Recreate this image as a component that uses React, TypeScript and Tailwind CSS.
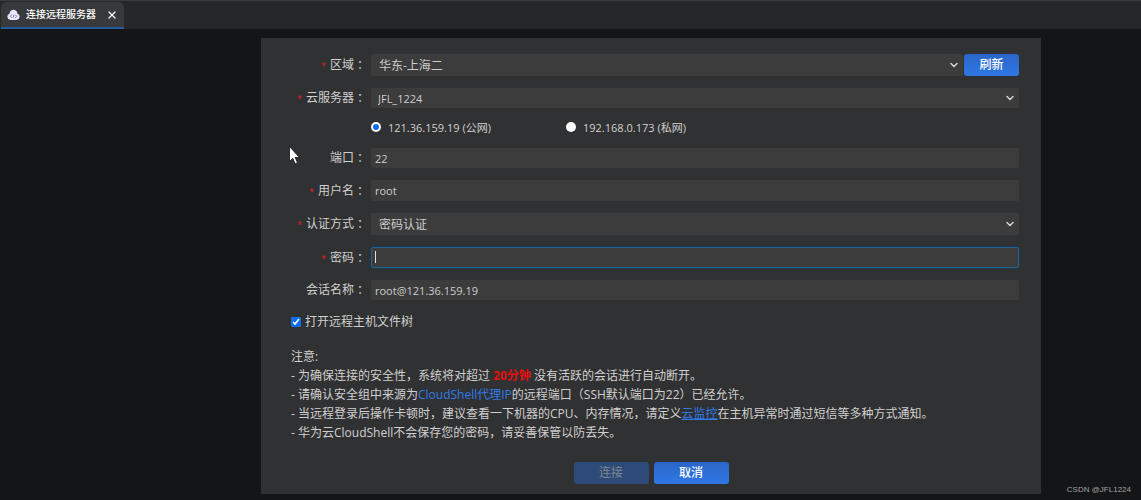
import type { ReactNode } from "react";
import { ChevronDown, X } from "lucide-react";

const fieldBase =
  "w-full min-w-0 rounded-xs bg-[#3c3c3c] text-[#cccccc] outline-none";

function Row({
  label,
  htmlFor,
  required,
  className,
  children,
}: {
  label: string;
  htmlFor: string;
  required?: boolean;
  className: string;
  children: ReactNode;
}) {
  return (
    <div className={`flex items-center ${className}`}>
      <label
        htmlFor={htmlFor}
        className="flex w-[75px] shrink-0 items-center justify-end leading-4 whitespace-nowrap"
      >
        {required && <span className="mr-1 pt-0.5 text-[9px] text-[#e0201f]">*</span>}
        {label}
        <span className="font-['Noto_Sans_CJK_TC',sans-serif]">：</span>
      </label>
      <div className="ml-[5px] flex min-w-0 flex-1 gap-px">{children}</div>
    </div>
  );
}

function Select({
  id,
  value,
  className,
}: {
  id: string;
  value: string;
  className: string;
}) {
  return (
    <div className="relative min-w-0 flex-1">
      <select id={id} className={`block appearance-none pt-0.5 ${fieldBase} ${className}`}>
        <option>{value}</option>
      </select>
      <ChevronDown
        size={12}
        strokeWidth={3}
        className="pointer-events-none absolute inset-y-0 right-[3px] my-auto text-[#d4d4d4]"
      />
    </div>
  );
}

function CloudLogo() {
  return (
    <svg width="13" height="12" viewBox="0 0 26 24" aria-hidden="true">
      <path
        d="M7 22a6.500 6.500 0 0 1-2-12.600C5.500 4.500 9 1.500 13 1.500s7.500 3 8 7.900A6.500 6.500 0 0 1 19 22z"
        fill="#e6e8fb"
      />
      <path
        d="M9.500 11.500 6.500 14.500l3 3M16.500 11.500l3 3-3 3M14 11.500l-2 6"
        fill="none"
        stroke="#6c79bb"
        strokeWidth="1.800"
      />
    </svg>
  );
}

export default function App() {
  return (
    <div className="relative flex min-h-screen flex-col bg-[#141517] font-['Open_Sans','Noto_Sans_CJK_SC',sans-serif] text-xs text-[#d0d0d0]">
      <header className="flex h-[29px] items-end border-t border-[#3a3b3c] bg-[#252728]">
        <div className="ml-px flex h-[27px] items-center rounded-t-md border-b-2 border-[#245a9e] bg-[#38393a] pr-1.5 pl-1.5 text-white">
          <CloudLogo />
          <span className="ml-1.5 text-[10px] font-medium">连接远程服务器</span>
          <button type="button" aria-label="关闭" className="ml-2.5 flex">
            <X size={12} strokeWidth={2.500} />
          </button>
        </div>
      </header>

      <main className="pt-[9px] pr-[100px] pb-1.5 pl-[261px]">
        <form className="bg-[#303132] px-[30px] pt-4 pb-2.5">
          <div className="mr-[-8px]">
            <Row label="区域" htmlFor="region" required className="mb-3 h-[22px]">
              <Select id="region" value="华东-上海二" className="h-[22px] pl-2 text-xs" />
              <button
                type="button"
                className="h-[22px] w-[55px] rounded-[3px] bg-linear-to-b from-[#2b66c8] to-[#2f78e4] font-medium text-white"
              >
                刷新
              </button>
            </Row>
            <Row label="云服务器" htmlFor="server" required className="h-5">
              <Select id="server" value="JFL_1224" className="h-5 pl-[7px] text-[11px]" />
            </Row>
            <div className="ml-20 flex h-10 items-center text-[11px]">
              <label className="flex w-[195px] items-center">
                <input
                  type="radio"
                  name="address"
                  defaultChecked
                  className="mr-[7px] mb-0.5 size-[10px] appearance-none rounded-full border-2 border-white bg-[#0b6df0]"
                />
                121.36.159.19 (公网)
              </label>
              <label className="flex items-center">
                <input
                  type="radio"
                  name="address"
                  className="mr-[7px] mb-0.5 size-[10px] appearance-none rounded-full bg-white"
                />
                192.168.0.173 (私网)
              </label>
            </div>
            <Row label="端口" htmlFor="port" className="mb-3 h-5">
              <input id="port" defaultValue="22" className={`h-5 px-1 text-[11px] ${fieldBase}`} />
            </Row>
            <Row label="用户名" htmlFor="user" required className="mb-3 h-[21px]">
              <input
                id="user"
                defaultValue="root"
                className={`h-[21px] px-1 text-[11px] ${fieldBase}`}
              />
            </Row>
            <Row label="认证方式" htmlFor="auth" required className="mb-3 h-[22px]">
              <Select id="auth" value="密码认证" className="h-[22px] pl-2 text-xs" />
            </Row>
            <Row label="密码" htmlFor="password" required className="mb-3 h-[21px]">
              <div className="relative flex-1">
                <input
                  id="password"
                  type="password"
                  className={`block h-[21px] border border-[#22628f] px-1 text-[11px] caret-transparent ring-1 ring-[#22384a] ${fieldBase}`}
                />
                <span className="absolute top-1 left-1 h-3 w-px bg-[#e0e0e0]" />
              </div>
            </Row>
            <Row label="会话名称" htmlFor="session" className="h-5">
              <input
                id="session"
                defaultValue="root@121.36.159.19"
                className={`h-5 px-1 text-[11px] ${fieldBase}`}
              />
            </Row>
          </div>

          <label className="mt-3 flex h-5 items-center">
            <input type="checkbox" defaultChecked className="mr-1 size-[10px] accent-[#0b6df0]" />
            打开远程主机文件树
          </label>

          <div className="mt-[15px] leading-[19px]">
            <p>注意:</p>
            <p>
              - 为确保连接的安全性，系统将对超过{" "}
              <strong className="font-bold text-[#e60f0f]">20分钟</strong> 没有活跃的会话进行自动断开。
            </p>
            <p>
              - 请确认安全组中来源为<span className="text-[#2f7bea]">CloudShell代理IP</span>
              的远程端口（SSH默认端口为22）已经允许。
            </p>
            <p>
              - 当远程登录后操作卡顿时，建议查看一下机器的CPU、内存情况，请定义
              <a href="#monitor" className="text-[#2f7bea] underline">
                云监控
              </a>
              在主机异常时通过短信等多种方式通知。
            </p>
            <p>- 华为云CloudShell不会保存您的密码，请妥善保管以防丢失。</p>
          </div>

          <div className="mt-5 flex justify-center gap-[5px]">
            <button
              type="button"
              disabled
              className="h-[22px] w-[75px] rounded-[3px] bg-[#2d4a78] text-[#7f8793]"
            >
              连接
            </button>
            <button
              type="button"
              className="h-[22px] w-[75px] rounded-[3px] bg-linear-to-b from-[#2b66c8] to-[#2f78e4] font-medium text-white"
            >
              取消
            </button>
          </div>
        </form>
      </main>

      <svg
        width="11"
        height="19"
        viewBox="0 0 11 19"
        className="pointer-events-none absolute top-[146px] left-[289px]"
        aria-hidden="true"
      >
        <path
          d="M.500.500v15l3.300-3.100 2.300 5.300 2.400-1-2.300-5.200h4.300z"
          fill="#fff"
          stroke="#111"
          strokeWidth=".800"
        />
      </svg>
      <span className="absolute right-2.5 bottom-1 font-['Liberation_Sans',sans-serif] text-[8px] text-[#a0a0a0]">
        CSDN @JFL1224
      </span>
    </div>
  );
}
